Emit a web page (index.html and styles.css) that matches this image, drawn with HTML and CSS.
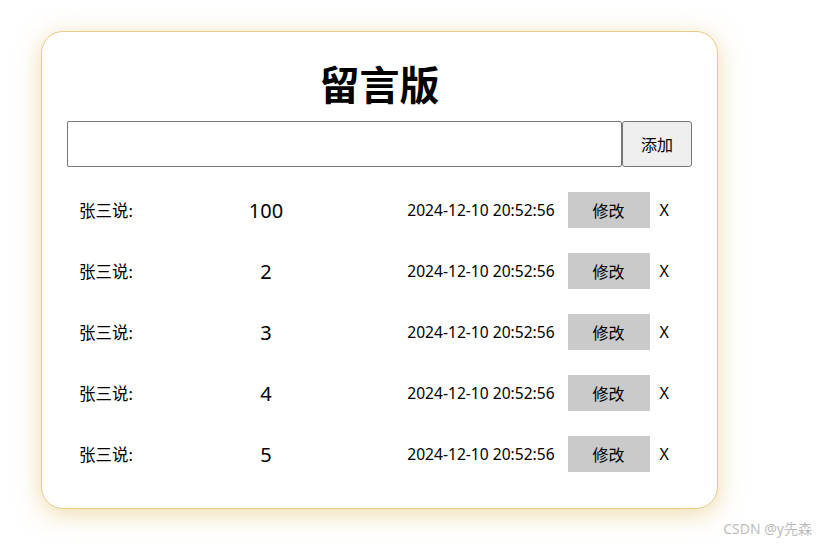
FILE: index.html
```html
<!DOCTYPE html>
<html lang="zh-CN">
<head>
    <meta charset="UTF-8">
    <title>留言版</title>
    <link rel="stylesheet" href="styles.css">
</head>
<body>

<!-- 留言板主体 -->
<div class="board">
    <h1 class="title">留言版</h1>

    <div class="add-bar">
        <input type="text" class="msg-input">
        <button class="add-btn">添加</button>
    </div>

    <ul class="msg-list">
        <li class="msg">
            <span class="who">张三说:</span>
            <span class="text">100</span>
            <span class="time">2024-12-10 20:52:56</span>
            <button class="edit">修改</button>
            <span class="del">X</span>
        </li>
        <li class="msg">
            <span class="who">张三说:</span>
            <span class="text">2</span>
            <span class="time">2024-12-10 20:52:56</span>
            <button class="edit">修改</button>
            <span class="del">X</span>
        </li>
        <li class="msg">
            <span class="who">张三说:</span>
            <span class="text">3</span>
            <span class="time">2024-12-10 20:52:56</span>
            <button class="edit">修改</button>
            <span class="del">X</span>
        </li>
        <li class="msg">
            <span class="who">张三说:</span>
            <span class="text">4</span>
            <span class="time">2024-12-10 20:52:56</span>
            <button class="edit">修改</button>
            <span class="del">X</span>
        </li>
        <li class="msg">
            <span class="who">张三说:</span>
            <span class="text">5</span>
            <span class="time">2024-12-10 20:52:56</span>
            <button class="edit">修改</button>
            <span class="del">X</span>
        </li>
    </ul>
</div>

<div class="watermark">CSDN @y先森</div>

</body>
</html>
```

FILE: styles.css
```css
* {
    box-sizing: border-box;
}

html {
    height: 100%;
}

body {
    margin: 0;
    min-height: 100%;
    padding: 31px 0 0 41px;
    font-family: "Noto Sans", "Noto Sans CJK SC", sans-serif;
    color: #000;
    background-color: #fff;
}

.board {
    width: 677px;
    padding: 28px 25px 36px 25px;
    border: 1px solid #e6cc88;
    border-radius: 22px;
    background-color: #fff;
    box-shadow: 0 5px 24px rgba(224, 186, 90, 0.5);
}

.title {
    margin: 0 0 11px 0;
    font-size: 40px;
    line-height: 50px;
    font-weight: bold;
    text-align: center;
}

.add-bar {
    display: flex;
    height: 46px;
}

.msg-input {
    flex: 1;
    height: 46px;
    margin: 0;
    border: 1px solid #767676;
    border-radius: 2px;
    font-size: 16px;
}

.add-btn {
    width: 70px;
    height: 46px;
    margin: 0;
    border: 1px solid #767676;
    border-radius: 3px;
    background-color: #efefef;
    font-family: inherit;
    font-size: 16px;
}

.msg-list {
    list-style: none;
    margin: 25px 0 0 0;
    padding: 0;
    display: flex;
    flex-direction: column;
    gap: 25px;
}

.msg {
    display: flex;
    align-items: center;
    height: 36px;
    padding: 0 23px 0 12px;
}

.who {
    width: 121px;
    font-size: 16.5px;
}

.text {
    width: 132px;
    text-align: center;
    font-size: 20px;
}

.time {
    margin-left: auto;
    font-size: 15.6px;
}

.edit {
    width: 82px;
    height: 36px;
    margin-left: 13px;
    border: none;
    background-color: #cacaca;
    font-family: inherit;
    font-size: 16px;
}

.del {
    margin-left: 10px;
    font-size: 16px;
}

.watermark {
    position: absolute;
    right: 10px;
    bottom: 6px;
    font-size: 14px;
    color: #bdbdbd;
}
```
